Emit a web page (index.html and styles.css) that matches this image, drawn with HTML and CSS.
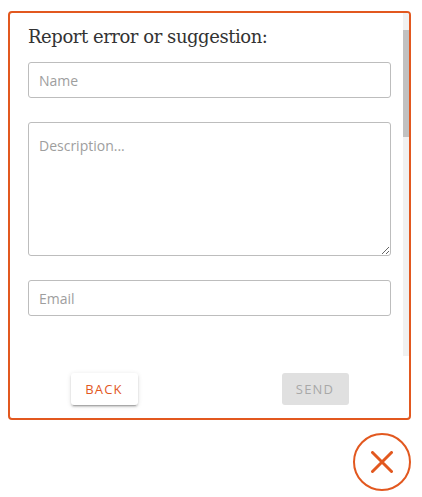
FILE: index.html
```html
<!DOCTYPE html>
<html>
<head>
<meta charset="utf-8">
<link rel="stylesheet" href="styles.css">
</head>
<body>
<div class="card">
  <div class="body">
    <div class="scroll">
      <h2 class="title">Report error or suggestion:</h2>
      <form class="form">
        <input class="field" type="text" placeholder="Name">
        <textarea class="field area" placeholder="Description..."></textarea>
        <input class="field" type="email" placeholder="Email">
      </form>
    </div>
    <div class="scrollbar"><div class="thumb"></div></div>
  </div>
  <div class="footer">
    <button class="btn back" type="button">BACK</button>
    <button class="btn send" type="button" disabled>SEND</button>
  </div>
</div>
<div class="closerow">
  <button class="close" type="button" aria-label="Close">
    <svg width="22" height="22" viewBox="0 0 22 22"><path d="M1.5 1.5 L20.5 20.5 M20.5 1.5 L1.5 20.5" stroke="#e2581f" stroke-width="3" stroke-linecap="round" fill="none"/></svg>
  </button>
</div>
</body>
</html>
```
FILE: styles.css
```css
html, body {
  margin: 0;
  padding: 0;
  background: #ffffff;
}
body {
  padding: 11px 11px 0 8px;
  font-family: "Open Sans", "Liberation Sans", sans-serif;
}
.card {
  width: 399px;
  border: 2px solid #e2581f;
  border-radius: 4px;
  display: flex;
  flex-direction: column;
  overflow: hidden;
}
.body {
  height: 343px;
  display: flex;
}
.scroll {
  flex: 1;
  overflow: hidden;
  padding: 12px 0 0 18px;
  box-sizing: border-box;
}
.scrollbar {
  width: 6px;
  background: #f1f1f1;
  padding-top: 17px;
  box-sizing: border-box;
}
.thumb {
  height: 107px;
  background: #c1c1c1;
}
.title {
  margin: 0;
  font-family: "DejaVu Serif", "Liberation Serif", serif;
  font-weight: normal;
  font-size: 18px;
  letter-spacing: -0.45px;
  line-height: 24px;
  color: #333333;
}
.form {
  display: flex;
  flex-direction: column;
  gap: 24px;
  margin-top: 13px;
  width: 363px;
}
.field {
  box-sizing: border-box;
  width: 363px;
  height: 36px;
  border: 1px solid #bdbdbd;
  border-radius: 3px;
  padding: 0 10px;
  font-family: "Open Sans", sans-serif;
  font-size: 14px;
  color: #333;
  outline: none;
  background: #fff;
  margin: 0;
}
.field::placeholder {
  color: #9e9e9e;
}
.area {
  height: 134px;
  padding: 12px 10px;
  line-height: 1.5;
  resize: vertical;
  display: block;
}
.footer {
  height: 62px;
  box-sizing: border-box;
  padding-top: 17px;
  display: flex;
  justify-content: center;
  align-items: flex-start;
  gap: 144px;
}
.btn {
  width: 67px;
  height: 32px;
  border: none;
  border-radius: 3px;
  font-family: "Open Sans", sans-serif;
  font-size: 13px;
  letter-spacing: 1.2px;
  padding: 0;
}
.back {
  background: #ffffff;
  color: #e2581f;
  box-shadow: 0 2px 2px rgba(0,0,0,0.14), 0 3px 1px -2px rgba(0,0,0,0.2), 0 1px 5px rgba(0,0,0,0.12);
}
.send {
  background: #e0e0e0;
  color: #a8a8a8;
}
.closerow {
  display: flex;
  justify-content: flex-end;
  width: 403px;
  margin-top: 13px;
}
.close {
  width: 58px;
  height: 58px;
  border: 2px solid #e2581f;
  border-radius: 50%;
  background: #fff;
  padding: 0;
  display: flex;
  align-items: center;
  justify-content: center;
}
```
